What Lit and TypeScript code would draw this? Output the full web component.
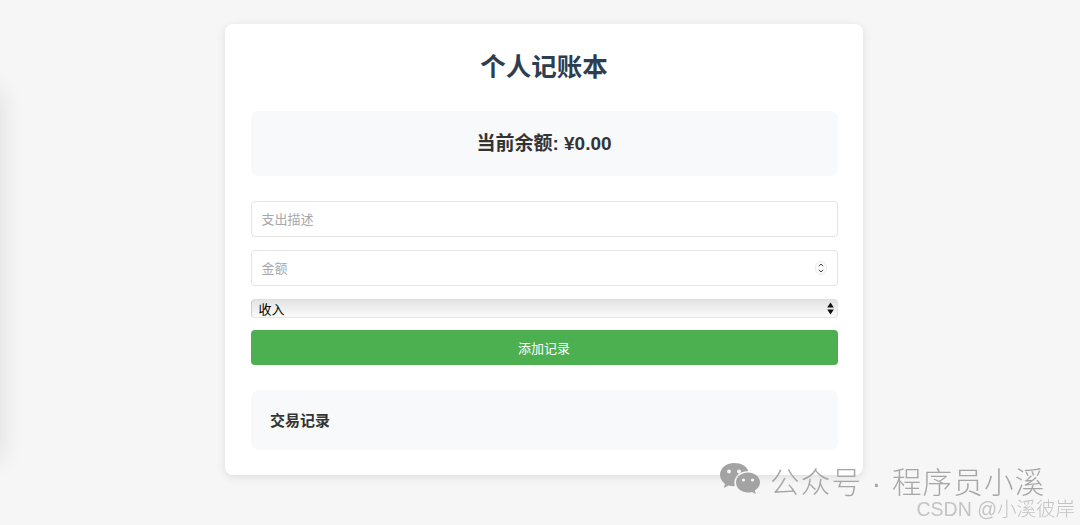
import { LitElement, html, css } from "lit";
import { customElement } from "lit/decorators.js";

@customElement("app-root")
export class AppRoot extends LitElement {
  static styles = css`
    :host {
      display: block;
      position: relative;
      height: 525px;
      overflow: hidden;
      background: #f6f6f6;
      font-family: "Liberation Sans", "Noto Sans CJK SC", sans-serif;
    }
    * { box-sizing: border-box; }
    .edge {
      position: absolute;
      left: -40px;
      top: 90px;
      width: 40px;
      height: 370px;
      box-shadow: 0 0 26px rgba(0, 0, 0, 0.11);
    }
    .card {
      width: 638px;
      height: 451px;
      margin: 0 0 0 225px;
      position: relative;
      top: 24px;
      padding: 25px 25.5px;
      background: #fff;
      border-radius: 8px;
      box-shadow: 0 2px 10px rgba(0, 0, 0, 0.1);
    }
    h1 {
      margin: 0 0 25px;
      height: 37px;
      line-height: 37px;
      font-size: 25.5px;
      font-weight: 700;
      text-align: center;
      color: #2c3e50;
    }
    .balance {
      height: 65px;
      margin-bottom: 25px;
      padding-bottom: 4px;
      display: flex;
      align-items: center;
      justify-content: center;
      background: #f8f9fa;
      border-radius: 8px;
      font-size: 19px;
      font-weight: 700;
      color: #333;
    }
    .form { display: flex; flex-direction: column; gap: 13px; }
    .field { position: relative; display: block; height: 36px; }
    input {
      display: block;
      width: 100%;
      height: 36px;
      padding: 0 10px 2px;
      border: 1px solid #e4e4e4;
      border-radius: 4px;
      background: #fff;
      outline: none;
      font: 13px "Noto Sans CJK SC", "Liberation Sans", sans-serif;
      color: #333;
    }
    input::placeholder { color: #a8a8a8; opacity: 1; }
    .spin {
      position: absolute;
      right: 11px;
      top: 11px;
      width: 12px;
      height: 14px;
    }
    select {
      display: block;
      width: 100%;
      height: 19px;
      padding: 0 16px 1px 7px;
      appearance: none;
      -webkit-appearance: none;
      border: 1px solid #e6e6e6;
      border-top-color: #dedede;
      border-left-color: #cfcfcf;
      border-radius: 4px;
      background: linear-gradient(#e3e3e3, #f0f0f0 55%, #fbfbfb);
      font: 13px/15px "Noto Sans CJK SC", "Liberation Sans", sans-serif;
      color: #000;
    }
    .selectwrap { position: relative; height: 19px; margin-bottom: -1px; }
    .arrows {
      position: absolute;
      right: 4px;
      top: 3px;
      width: 7px;
      height: 13px;
    }
    button {
      display: block;
      width: 100%;
      height: 35px;
      padding: 0 0 1px;
      border: none;
      border-radius: 4px;
      background: #4caf50;
      color: #fff;
      font: 13px "Noto Sans CJK SC", "Liberation Sans", sans-serif;
    }
    .records {
      height: 60px;
      margin-top: 25px;
      padding: 0 19.5px 1px;
      display: flex;
      align-items: center;
      background: #f8f9fa;
      border-radius: 8px;
    }
    h2 {
      margin: 0;
      font-size: 15px;
      font-weight: 700;
      color: #333;
    }
    .mark {
      position: absolute;
      left: 719px;
      top: 461px;
      display: flex;
      align-items: center;
      gap: 9px;
      height: 38px;
      filter: blur(0.3px);
    }
    .mark svg { width: 42px; height: 36px; display: block; }
    .mark span {
      font-size: 29.5px;
      letter-spacing: 1.2px;
      font-weight: 300;
      color: #a6a6a6;
      white-space: nowrap;
    }
    .csdn {
      position: absolute;
      right: 5px;
      top: 497px;
      font-size: 19.5px;
      line-height: 24px;
      font-weight: 300;
      color: #c4c4c4;
      white-space: nowrap;
      filter: blur(0.3px);
    }
  `;

  render() {
    return html`
      <div class="edge"></div>
      <main class="card">
        <h1>个人记账本</h1>
        <div class="balance">当前余额: ¥0.00</div>
        <div class="form">
          <label class="field"><input type="text" placeholder="支出描述" /></label>
          <label class="field">
            <input type="text" placeholder="金额" />
            <svg class="spin" viewBox="0 0 12 14" fill="none" stroke="#444" stroke-width="1">
              <rect x="0.5" y="0.5" width="11" height="13" rx="5.5" fill="#fafafa" stroke="#ececec" />
              <path d="M3.8 5.2 6 3l2.2 2.2M3.8 8.8 6 11l2.2-2.2" />
            </svg>
          </label>
          <div class="selectwrap">
            <select><option>收入</option><option>支出</option></select>
            <svg class="arrows" viewBox="0 0 7 13" fill="#111">
              <path d="M3.500 0.500 6.800 5.600H0.200zM3.500 12.500 0.200 7.400h6.600z" />
            </svg>
          </div>
          <button type="button">添加记录</button>
        </div>
        <section class="records"><h2>交易记录</h2></section>
      </main>
      <div class="mark">
        <svg viewBox="0 0 42 36" fill="#a3a3a3">
          <path d="M15 1C7 1 1 6.200 1 12.800c0 3.700 2 6.900 5.100 9.100L4.800 26l4.700-2.500c1.700.5 3.400.8 5.200.8h1.200c-.4-1.200-.6-2.400-.6-3.600 0-6.300 5.700-11.400 12.900-11.400h1C28.300 4.300 22.200 1 15 1z" />
          <path d="M41 20.500C41 14.800 35.400 10.500 29 10.500s-12 4.300-12 10 5.600 10 12 10c1.400 0 2.700-.2 4-.6l3.800 2.100-1-3.400c3.200-2.200 5.200-5 5.200-8.100z" />
          <g fill="#f6f6f6">
            <circle cx="10" cy="9.500" r="1.900" /><circle cx="20" cy="9.500" r="1.900" />
            <circle cx="24.500" cy="18" r="1.600" /><circle cx="33.500" cy="18" r="1.600" />
          </g>
        </svg>
        <span>公众号 · 程序员小溪</span>
      </div>
      <div class="csdn">CSDN @小溪彼岸</div>
    `;
  }
}
